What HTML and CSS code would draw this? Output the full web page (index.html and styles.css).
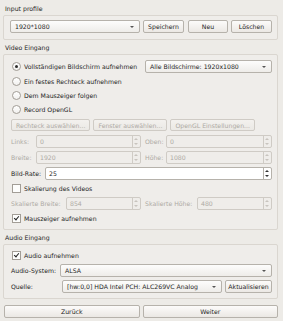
FILE: index.html
```html
<!DOCTYPE html>
<html>
<head>
<meta charset="utf-8">
<link rel="stylesheet" href="styles.css">
</head>
<body>
<div class="win">
  <div class="title">Input profile</div>
  <div class="group g-profile">
    <div class="row">
      <div class="combo w-profile"><span>1920*1080</span><i class="arr"></i></div>
      <div class="btn b-save">Speichern</div>
      <div class="btn b-new">Neu</div>
      <div class="btn b-del">Löschen</div>
    </div>
  </div>

  <div class="title">Video Eingang</div>
  <div class="group g-video">
    <div class="row r13">
      <label class="opt"><span class="radio on"></span>Vollständigen Bildschirm aufnehmen</label>
      <div class="combo w-screens"><span>Alle Bildschirme: 1920x1080</span><i class="arr"></i></div>
    </div>
    <label class="opt r11"><span class="radio"></span>Ein festes Rechteck aufnehmen</label>
    <label class="opt r11"><span class="radio"></span>Dem Mauszeiger folgen</label>
    <label class="opt r11"><span class="radio"></span>Record OpenGL</label>
    <div class="row btnrow">
      <div class="btn dis">Rechteck auswählen...</div>
      <div class="btn dis">Fenster auswählen...</div>
      <div class="btn dis">OpenGL Einstellungen...</div>
    </div>
    <div class="pair first">
      <div class="half"><span class="lbl dis l1">Links:</span><div class="spin dis"><span>0</span><i class="sb"></i></div></div>
      <div class="half"><span class="lbl dis l2">Oben:</span><div class="spin dis"><span>0</span><i class="sb"></i></div></div>
    </div>
    <div class="pair">
      <div class="half"><span class="lbl dis l1">Breite:</span><div class="spin dis"><span>1920</span><i class="sb"></i></div></div>
      <div class="half"><span class="lbl dis l2">Höhe:</span><div class="spin dis"><span>1080</span><i class="sb"></i></div></div>
    </div>
    <div class="row r13">
      <span class="lbl l3">Bild-Rate:</span><div class="spin"><span>25</span><i class="sb on"></i></div>
    </div>
    <label class="opt r11"><span class="check"></span>Skalierung des Videos</label>
    <div class="pair">
      <div class="half"><span class="lbl dis l4">Skalierte Breite:</span><div class="spin dis"><span>854</span><i class="sb"></i></div></div>
      <div class="half"><span class="lbl dis l5">Skalierte Höhe:</span><div class="spin dis"><span>480</span><i class="sb"></i></div></div>
    </div>
    <label class="opt r11"><span class="check on"></span>Mauszeiger aufnehmen</label>
  </div>

  <div class="title">Audio Eingang</div>
  <div class="group g-audio">
    <label class="opt r11"><span class="check on"></span>Audio aufnehmen</label>
    <div class="row r13">
      <span class="lbl l6">Audio-System:</span>
      <div class="combo grow"><span>ALSA</span><i class="arr"></i></div>
    </div>
    <div class="row r13">
      <span class="lbl l7">Quelle:</span>
      <div class="combo grow"><span>[hw:0,0] HDA Intel PCH: ALC269VC Analog</span><i class="arr"></i></div>
      <div class="btn b-upd">Aktualisieren</div>
    </div>
  </div>

  <div class="nav">
    <div class="btn">Zurück</div>
    <div class="btn">Weiter</div>
  </div>
</div>
</body>
</html>
```

FILE: styles.css
```css
html, body {
  margin: 0;
  padding: 0;
  background: #edebe7;
}
body {
  font-family: "DejaVu Sans", sans-serif;
  font-size: 6.2px;
  color: #1e1e1e;
  width: 283px;
  height: 321px;
  overflow: hidden;
}
.win {
  display: flex;
  flex-direction: column;
  padding: 4px 5px 0 3px;
}
.title {
  height: 10px;
  line-height: 10px;
  padding-left: 2px;
  margin-bottom: 1px;
}
.group {
  border: 1px solid #dad6d0;
  border-radius: 2px;
  background: #efedea;
  display: flex;
  flex-direction: column;
  gap: 3px;
  padding: 5px 5px 5px 6px;
  margin-bottom: 3px;
}
.g-profile { padding: 4px 5px 6px 6px; }
.row {
  display: flex;
  align-items: center;
  gap: 3px;
}
.r13 { height: 13px; }
.r11 { height: 11px; }
.opt {
  display: flex;
  align-items: center;
  gap: 3px;
  padding-left: 2px;
  white-space: nowrap;
}
.radio {
  width: 7px;
  height: 7px;
  border-radius: 50%;
  border: 1px solid #a29d96;
  background: linear-gradient(#ffffff, #f1f0ee);
  display: inline-flex;
  align-items: center;
  justify-content: center;
  box-sizing: content-box;
}
.radio.on::after {
  content: "";
  width: 3px;
  height: 3px;
  border-radius: 50%;
  background: #2b2b2b;
}
.check {
  width: 7px;
  height: 7px;
  border: 1px solid #a29d96;
  background: #fdfdfc;
  position: relative;
}
.check.on::after {
  content: "";
  position: absolute;
  left: 2px;
  top: 0px;
  width: 2px;
  height: 4px;
  border: solid #222;
  border-width: 0 1px 1px 0;
  transform: rotate(40deg);
}
.combo, .btn, .spin {
  box-sizing: border-box;
  height: 13px;
  border: 1px solid #b6b2ab;
  border-radius: 2px;
  display: flex;
  align-items: center;
  white-space: nowrap;
}
.combo {
  background: linear-gradient(#fdfdfc, #eeece9);
  padding: 0 5px 0 4px;
  justify-content: space-between;
  overflow: hidden;
}
.arr {
  width: 0;
  height: 0;
  border-left: 2px solid transparent;
  border-right: 2px solid transparent;
  border-top: 2px solid #555;
  flex: none;
}
.w-profile { width: 133px; }
.w-screens { width: 127px; margin-left: auto; }
.grow { flex: 1; min-width: 0; }
.btn {
  background: linear-gradient(#fcfbfa, #ebe8e4);
  justify-content: center;
  padding: 0 4px;
  flex: none;
}
.b-save { width: 41px; }
.b-new { width: 40px; margin-left: 1px; }
.b-del { width: 41px; }
.b-upd { width: 47px; }
.btn.dis {
  color: #aeaaa4;
  border-color: #cfcbc5;
  background: linear-gradient(#f3f1ee, #ebe9e5);
  height: 12px;
}
.btnrow { height: 12px; padding-left: 1px; gap: 3px; margin-top: 1px; }
.pair {
  display: grid;
  grid-template-columns: 131px 1fr;
  column-gap: 3px;
  height: 13px;
}
.pair.first { margin-top: 1px; }
.half {
  display: flex;
  align-items: center;
  gap: 2px;
}
.lbl {
  flex: none;
  padding-left: 1px;
  white-space: nowrap;
}
.lbl.dis { color: #aeaaa4; }
.l1 { width: 23px; }
.l2 { width: 19px; }
.l3 { width: 31px; }
.l4 { width: 53px; }
.l5 { width: 50px; }
.l6 { width: 46px; }
.l7 { width: 48px; }
.spin {
  flex: 1;
  min-width: 0;
  background: #ffffff;
  padding-left: 3px;
  justify-content: space-between;
  position: relative;
}
.spin.dis {
  background: #efedea;
  border-color: #cfcbc5;
  color: #aeaaa4;
}
.sb {
  width: 7px;
  align-self: stretch;
  border-left: 1px solid #cfcbc5;
  position: relative;
}
.sb::before, .sb::after {
  content: "";
  position: absolute;
  left: 1px;
  width: 0;
  height: 0;
  border-left: 2px solid transparent;
  border-right: 2px solid transparent;
}
.sb::before { top: 2px; border-bottom: 2px solid #c8c4be; }
.sb::after { bottom: 2px; border-top: 2px solid #c8c4be; }
.sb.on { border-left-color: #b6b2ab; }
.sb.on::before { border-bottom-color: #333; }
.sb.on::after { border-top-color: #333; }
.nav {
  display: grid;
  grid-template-columns: 1fr 1fr;
  column-gap: 3px;
  margin-top: 3px;
  padding-left: 1px;
}
.nav .btn { height: 13px; }
```
